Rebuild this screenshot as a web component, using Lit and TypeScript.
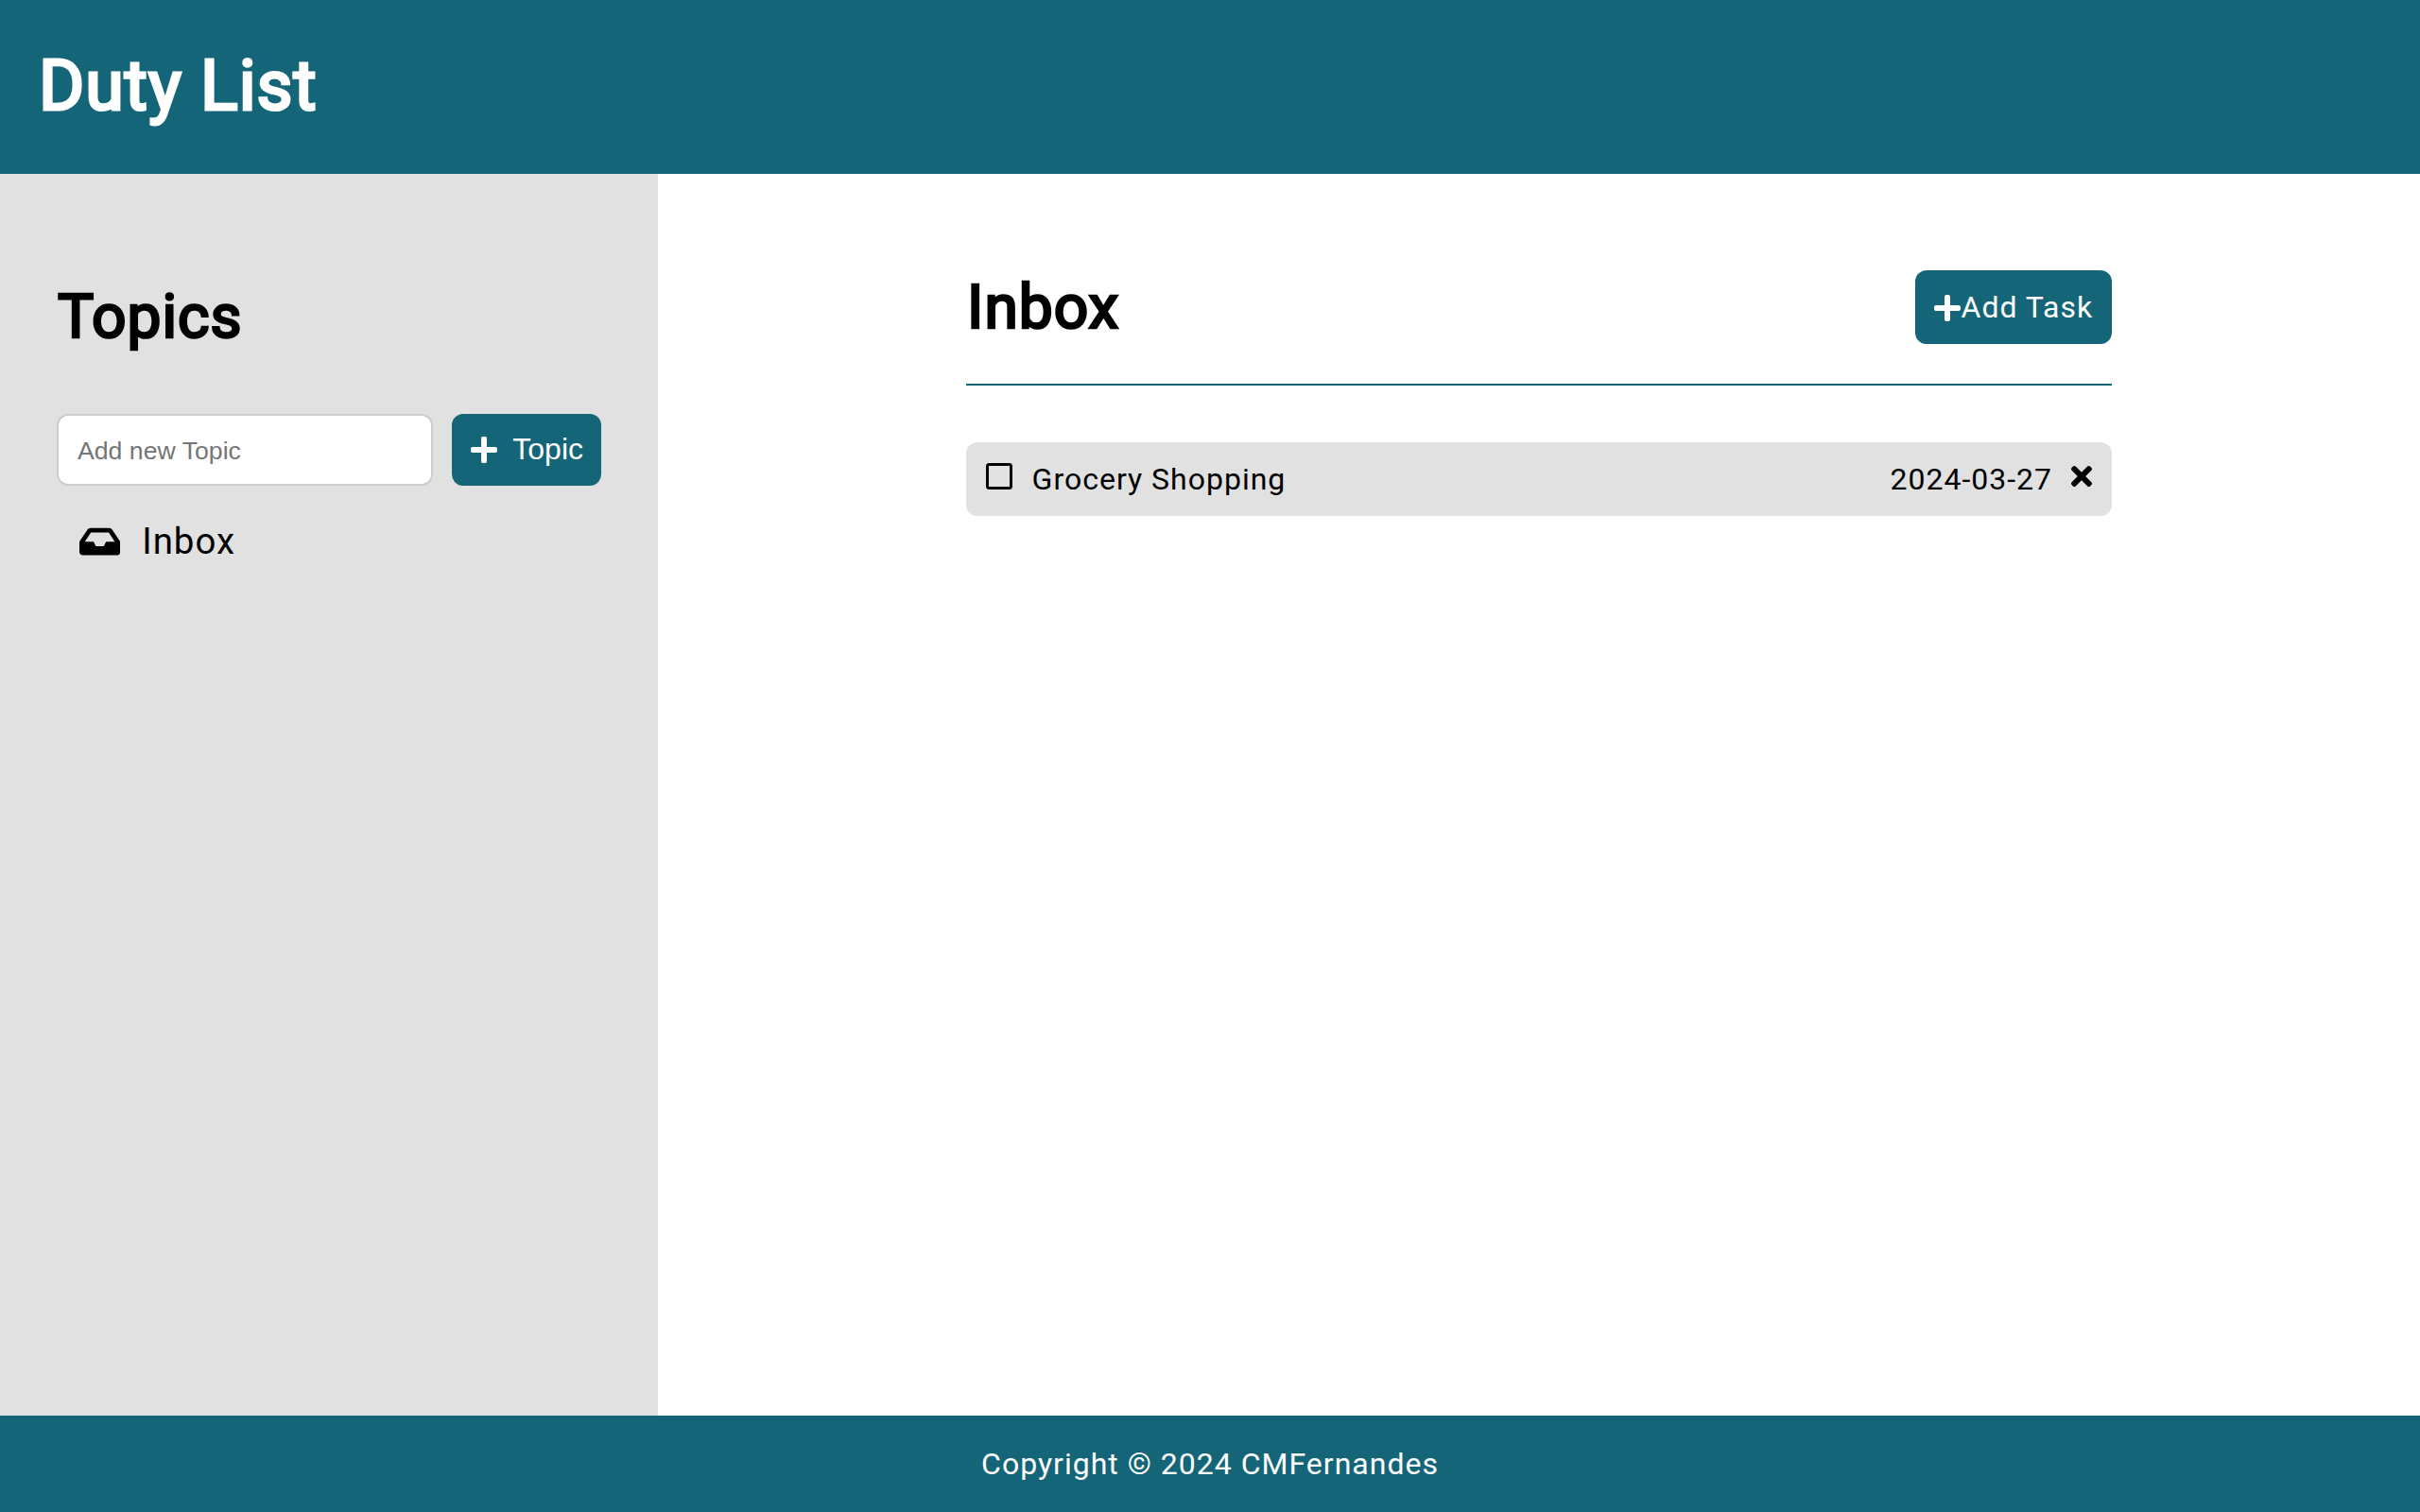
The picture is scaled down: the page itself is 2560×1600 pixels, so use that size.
import { LitElement, html, css, svg } from "lit";
import { customElement, property, state } from "lit/decorators.js";

interface Task {
  title: string;
  due: string;
}

const icons: Record<string, { width: number; path: string }> = {
  plus: {
    width: 448,
    path: "M416 208H272V64c0-17.67-14.33-32-32-32h-32c-17.67 0-32 14.33-32 32v144H32c-17.67 0-32 14.33-32 32v32c0 17.67 14.33 32 32 32h144v144c0 17.67 14.33 32 32 32h32c17.67 0 32-14.33 32-32V304h144c17.67 0 32-14.33 32-32v-32c0-17.67-14.33-32-32-32z",
  },
  inbox: {
    width: 576,
    path: "M567.938 243.908L462.25 85.374A48.003 48.003 0 0 0 422.311 64H153.689a48 48 0 0 0-39.938 21.374L8.062 243.908A47.994 47.994 0 0 0 0 270.533V400c0 26.51 21.49 48 48 48h480c26.51 0 48-21.49 48-48V270.533a47.994 47.994 0 0 0-8.062-26.625zM162.252 128h251.497l85.333 128H376l-32 64H232l-32-64H76.918l85.334-128z",
  },
  square: {
    width: 448,
    path: "M400 32H48C21.5 32 0 53.5 0 80v352c0 26.5 21.5 48 48 48h352c26.5 0 48-21.5 48-48V80c0-26.5-21.5-48-48-48zm-6 400H54c-3.3 0-6-2.7-6-6V86c0-3.3 2.7-6 6-6h340c3.3 0 6 2.7 6 6v340c0 3.3-2.7 6-6 6z",
  },
  times: {
    width: 352,
    path: "M242.72 256l100.07-100.07c12.28-12.28 12.28-32.19 0-44.48l-22.24-22.24c-12.28-12.28-32.19-12.28-44.48 0L176 189.28 75.93 89.21c-12.28-12.28-32.19-12.28-44.48 0L9.21 111.45c-12.28 12.28-12.28 32.19 0 44.48L109.28 256 9.21 356.07c-12.28 12.28-12.28 32.19 0 44.48l22.24 22.24c12.28 12.28 32.2 12.28 44.48 0L176 322.72l100.07 100.07c12.28 12.28 32.2 12.28 44.48 0l22.24-22.24c12.28-12.28 12.28-32.19 0-44.48L242.72 256z",
  },
};

@customElement("duty-icon")
export class DutyIcon extends LitElement {
  @property() name = "plus";

  static styles = css`
    :host {
      display: block;
      flex: none;
      height: 1em;
      margin-right: 1px;
    }
    .glyph {
      display: block;
      height: 1em;
      fill: currentColor;
    }
  `;

  render() {
    const icon = icons[this.name];
    return html`<svg class="glyph" viewBox="0 0 ${icon.width} 512" aria-hidden="true">
      ${svg`<path d=${icon.path}></path>`}
    </svg>`;
  }
}

@customElement("app-root")
export class AppRoot extends LitElement {
  @state() private topics: string[] = ["Inbox"];
  @state() private current = "Inbox";
  @state() private tasks: Task[] = [{ title: "Grocery Shopping", due: "2024-03-27" }];

  static styles = css`
    :host {
      display: grid;
      grid-template: 184px 1fr 102px / 696px 1fr;
      height: 100vh;
      background: #fff;
      color: #000;
      font: 32px/38px Roboto, sans-serif;
      letter-spacing: 1px;
    }
    .header,
    .footer {
      grid-column: 1 / -1;
      display: flex;
      align-items: center;
      background: #146578;
      color: #fff;
    }
    .header {
      padding: 0 41px;
    }
    .footer {
      justify-content: center;
    }
    .title,
    .heading {
      margin: 0;
      font-weight: 400;
    }
    .title {
      padding-bottom: 2px;
      font-size: 73.6px;
      line-height: 86px;
      -webkit-text-stroke: 3.1px currentColor;
    }
    .heading {
      padding: 1px 0 0 1px;
      font-size: 64px;
      line-height: 78px;
      -webkit-text-stroke: 2.7px currentColor;
    }
    .sidebar {
      display: flex;
      flex-direction: column;
      padding: 112px 60px 0;
      background: #e1e1e1;
    }
    .topic-form {
      display: flex;
      gap: 20px;
      height: 76px;
      margin-top: 63px;
    }
    .topic-input {
      box-sizing: border-box;
      flex: 1;
      min-width: 0;
      padding: 2px 20px 0;
      border: 2px solid #ccc;
      border-radius: 12px;
      background: #fff;
      font: 26.667px "Liberation Sans", Arial, sans-serif;
      outline: none;
    }
    .topic-button {
      display: flex;
      align-items: center;
      justify-content: space-between;
      box-sizing: border-box;
      width: 158px;
      padding: 0 19px 0 20px;
      border: 0;
      border-radius: 12px;
      background: #146578;
      color: #fff;
      font: 32px "Liberation Sans", Arial, sans-serif;
    }
    .topic-label {
      margin-bottom: 2px;
    }
    .topics {
      display: flex;
      flex-direction: column;
      margin: 36px 0 0;
      padding: 0 24px;
      list-style: none;
      font-size: 38.4px;
      line-height: 45px;
    }
    .topic {
      display: flex;
      align-items: center;
      gap: 22px;
    }
    .main {
      display: flex;
      flex-direction: column;
      align-items: center;
      padding-top: 102px;
    }
    .project {
      width: 1212px;
    }
    .project-head {
      display: flex;
      justify-content: space-between;
      align-items: flex-start;
      height: 120px;
      border-bottom: 2px solid #146578;
    }
    .add-task {
      display: flex;
      align-items: center;
      box-sizing: border-box;
      width: 208px;
      height: 78px;
      padding-left: 19.5px;
      border-radius: 12px;
      background: #146578;
      color: #fff;
      white-space: nowrap;
    }
    .tasks {
      margin: 60px 0 0;
      padding: 0;
      list-style: none;
    }
    .task {
      display: flex;
      align-items: center;
      gap: 20px;
      height: 78px;
      padding: 0 20px 0 20.6px;
      border-radius: 12px;
      background: #e1e1e1;
    }
    .task-title {
      flex: 1;
    }
    .raised {
      margin-bottom: 6px;
    }
    .lowered {
      margin-top: 2px;
    }
  `;

  render() {
    return html`
      <header class="header"><h1 class="title">Duty List</h1></header>
      <aside class="sidebar">
        <h2 class="heading">Topics</h2>
        <form class="topic-form" @submit=${this.addTopic}>
          <input class="topic-input" name="topic" placeholder="Add new Topic" />
          <button class="topic-button"><duty-icon name="plus"></duty-icon><span class="topic-label">Topic</span></button>
        </form>
        <ul class="topics">
          ${this.topics.map(
            (topic) => html`<li class="topic" @click=${() => (this.current = topic)}>
              <duty-icon class="lowered" name="inbox"></duty-icon><span>${topic}</span>
            </li>`
          )}
        </ul>
      </aside>
      <main class="main">
        <section class="project">
          <div class="project-head">
            <h2 class="heading">${this.current}</h2>
            <div class="add-task" role="button"><duty-icon class="lowered" name="plus"></duty-icon><span>Add Task</span></div>
          </div>
          <ul class="tasks">
            ${this.tasks.map(
              (task) => html`<li class="task">
                <duty-icon class="raised" name="square"></duty-icon>
                <span class="task-title">${task.title}</span>
                <span>${task.due}</span>
                <duty-icon class="raised" name="times" @click=${() => this.removeTask(task)}></duty-icon>
              </li>`
            )}
          </ul>
        </section>
      </main>
      <footer class="footer"><span>Copyright © 2024 CMFernandes</span></footer>
    `;
  }

  private addTopic(event: SubmitEvent) {
    event.preventDefault();
    const form = event.target as HTMLFormElement;
    const name = String(new FormData(form).get("topic") ?? "").trim();
    if (name) this.topics = [...this.topics, name];
    form.reset();
  }

  private removeTask(task: Task) {
    this.tasks = this.tasks.filter((entry) => entry !== task);
  }
}
